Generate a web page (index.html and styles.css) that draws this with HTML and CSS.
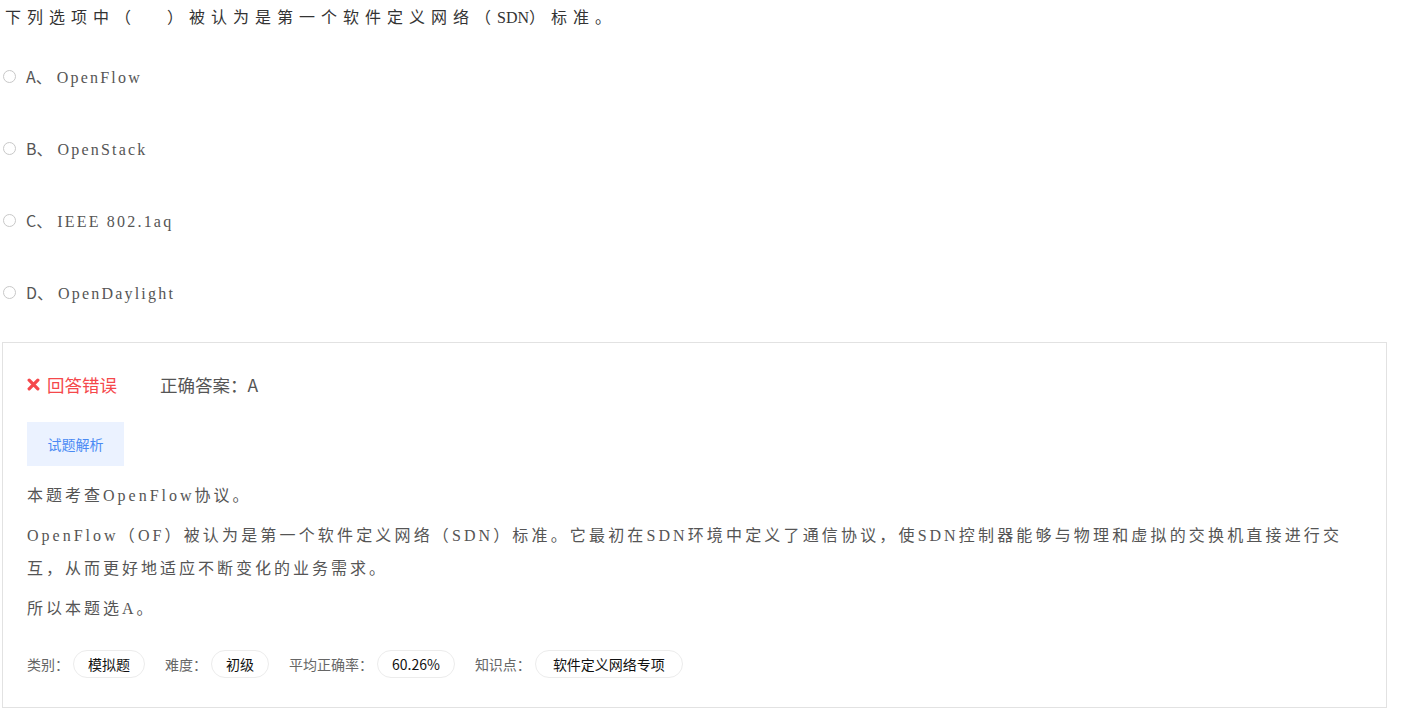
FILE: index.html
```html
<!DOCTYPE html>
<html lang="zh-CN">
<head>
    <meta charset="UTF-8">
    <title>试题</title>
    <link rel="stylesheet" href="styles.css">
</head>
<body>

<div class="page">
    <p class="question">下列选项中（&nbsp;&nbsp;&nbsp;）被认为是第一个软件定义网络（<span class="latin">SDN</span>）标准。</p>

    <ul class="options">
        <li class="option"><span class="radio"></span><span class="letter">A、</span><span class="opt-text">OpenFlow</span></li>
        <li class="option"><span class="radio"></span><span class="letter">B、</span><span class="opt-text">OpenStack</span></li>
        <li class="option"><span class="radio"></span><span class="letter">C、</span><span class="opt-text">IEEE 802.1aq</span></li>
        <li class="option"><span class="radio"></span><span class="letter">D、</span><span class="opt-text">OpenDaylight</span></li>
    </ul>

    <div class="result">
        <div class="result-head">
            <span class="wrong">
                <svg class="wrong-icon" viewBox="0 0 12 12" width="13" height="13">
                    <path d="M2 2 L10 10 M10 2 L2 10" stroke="#f5484b" stroke-width="3" stroke-linecap="round"/>
                </svg>
                回答错误
            </span>
            <span class="answer">正确答案：A</span>
        </div>

        <div class="analysis-btn">试题解析</div>

        <div class="analysis">
            <p>本题考查OpenFlow协议。</p>
            <p>OpenFlow（OF）被认为是第一个软件定义网络（SDN）标准。它最初在SDN环境中定义了通信协议，使SDN控制器能够与物理和虚拟的交换机直接进行交互，从而更好地适应不断变化的业务需求。</p>
            <p>所以本题选A。</p>
        </div>

        <div class="meta">
            <span class="meta-label">类别：</span><span class="tag">模拟题</span>
            <span class="meta-label">难度：</span><span class="tag">初级</span>
            <span class="meta-label">平均正确率：</span><span class="tag">60.26%</span>
            <span class="meta-label">知识点：</span><span class="tag">软件定义网络专项</span>
        </div>
    </div>
</div>

</body>
</html>
```

FILE: styles.css
```css
body {
    margin: 0;
    background-color: #fff;
}
.page {
    padding: 0 14px 0 2px;
}
.question {
    margin: 0;
    padding: 8px 0 0 3px;
    font-family: "Liberation Serif", "Noto Sans CJK SC", serif;
    font-size: 16px;
    line-height: 20px;
    letter-spacing: 6px;
    color: #333;
}
.latin {
    letter-spacing: 0;
}
.options {
    list-style: none;
    margin: 0;
    padding: 0;
}
.option {
    display: flex;
    align-items: center;
    height: 72px;
}
.option:first-child {
    margin-top: 14px;
}
.radio {
    width: 11px;
    height: 11px;
    border: 1px solid #c8c8c8;
    border-radius: 50%;
    margin: 0 10px 4px 1px;
    background-color: #fff;
}
.letter {
    font-family: "Noto Sans CJK SC", sans-serif;
    font-size: 16px;
    color: #555;
    margin-bottom: 4px;
}
.opt-text {
    font-family: "Liberation Serif", "Noto Sans CJK SC", serif;
    font-size: 16px;
    letter-spacing: 2.2px;
    color: #555;
    margin-left: 5px;
}
.result {
    margin-top: 12px;
    border: 1px solid #e2e2e2;
    padding: 20px 24px 29px;
    font-family: "Noto Sans CJK SC", sans-serif;
}
.result-head {
    display: flex;
    align-items: center;
    height: 42px;
    font-size: 17.5px;
}
.wrong {
    color: #f5484b;
    display: flex;
    align-items: center;
    width: 133px;
}
.wrong-icon {
    margin-right: 7px;
}
.answer {
    color: #555;
}
.analysis-btn {
    display: inline-block;
    margin-top: 17px;
    width: 97px;
    height: 44px;
    line-height: 44px;
    text-align: center;
    background-color: #ebf2ff;
    color: #4a8af4;
    font-size: 14px;
}
.analysis {
    margin-top: 13px;
    padding-right: 20px;
    font-family: "Liberation Serif", "Noto Sans CJK SC", serif;
    font-size: 16px;
    line-height: 33px;
    letter-spacing: 3px;
    text-align: justify;
    color: #555;
}
.analysis p {
    margin: 0 0 7px;
}
.meta {
    display: flex;
    align-items: center;
    margin-top: 25px;
    font-size: 14px;
}
.meta-label {
    color: #666;
    margin-right: 4px;
}
.tag {
    border: 1px solid #ececec;
    border-radius: 14px;
    padding: 0 14px;
    height: 26px;
    line-height: 26px;
    color: #111;
    margin-right: 20px;
}
.tag:last-child {
    padding: 0 17px;
}
```
